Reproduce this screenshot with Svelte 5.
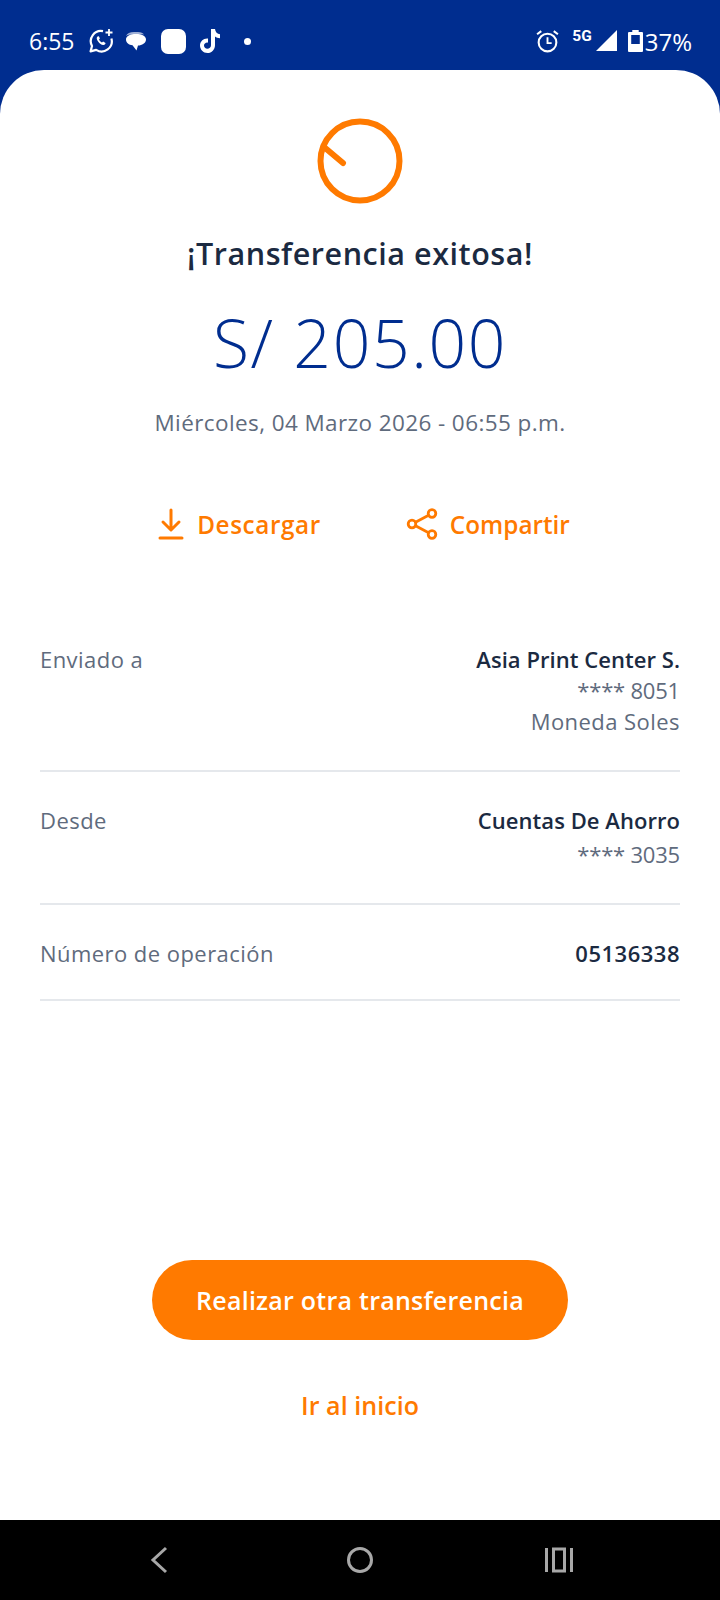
<script lang="ts">
  const rows = [
    { label: 'Enviado a', title: 'Asia Print Center S.', lines: ['**** 8051', 'Moneda Soles'] },
    { label: 'Desde', title: 'Cuentas De Ahorro', lines: ['**** 3035'] },
    { label: 'Número de operación', title: '05136338', lines: [] as string[] }
  ]
</script>

<div class="phone">
  <header class="status">
    <div class="status-left">
      <span class="clock">6:55</span>
      <svg width="26" height="26" viewBox="0 0 26 26" fill="none" stroke="#fff" stroke-width="2.2" class="i-wa">
        <path d="M15 3.2A10.2 10.2 0 0 0 4 18l-1.4 5.4 5.6-1.5A10.2 10.2 0 0 0 23.4 10.5" stroke-linejoin="round"/>
        <path d="M9.5 8.5c-1.2 1-1 2.8.6 5s3.6 3.6 5.4 3.4c1.3-.2 2.1-1 2-2l-2.4-1.3-1.1 1c-1.3-.5-2.4-1.7-3-3l.9-1-1-2.4z" fill="#fff" stroke="none"/>
        <path d="M21 1v7M17.5 4.500h7" stroke-width="1.800"/>
      </svg>
      <svg width="24" height="24" viewBox="0 0 24 24" class="i-msg">
        <path d="M2 7c1-2.500 4-4 8-4h4c3 0 5 1 6 2.500-2-.5-4-.5-7-.5-5 0-9 .5-11 2z" fill="#9fb0d6"/>
        <path d="M2 10.500C2 7 6 5 12 5s10 2 10 5.500-4 6-8 6l-1.500 5-4-5.200C5 16 2 14 2 10.500z" fill="#fff"/>
      </svg>
      <span class="app-square"></span>
      <svg width="24" height="26" viewBox="0 0 24 26" class="i-tt">
        <path d="M13 1h4c.3 3 2.300 5 5 5.300v4c-2-.1-3.700-.7-5-1.700v8.600c0 4.300-3.300 7.800-7.500 7.800S2 21.500 2 17.500s3.500-7.500 8-7v4.200c-2-.5-4 1-4 2.900 0 1.800 1.500 3.200 3.300 3.200 2 0 3.700-1.400 3.700-3.600z" fill="#fff"/>
      </svg>
      <span class="dot"></span>
    </div>
    <div class="status-right">
      <svg width="25" height="25" viewBox="0 0 24 24" fill="none" stroke="#fff" class="i-alarm">
        <circle cx="12" cy="13" r="8.500" stroke-width="2"/>
        <path d="M12 8v5.500h4" stroke-width="1.800"/>
        <path d="M2 5l4-3M22 5l-4-3" stroke-width="2"/>
      </svg>
      <span class="net">5G</span>
      <svg width="22" height="22" viewBox="0 0 22 22" class="i-signal"><path d="M21 0v21H0z" fill="#fff"/></svg>
      <svg width="15" height="22" viewBox="0 0 14 22" preserveAspectRatio="none" class="i-batt">
        <path fill-rule="evenodd" d="M4 0h6v2h3a1 1 0 0 1 1 1v18a1 1 0 0 1-1 1H1a1 1 0 0 1-1-1V3a1 1 0 0 1 1-1h3zM3 5v9h8V5z" fill="#fff"/>
      </svg>
      <span class="pct">37%</span>
    </div>
  </header>

  <main class="card">
    <svg class="result-icon" width="86" height="86" viewBox="0 0 86 86" fill="none" stroke="#ff7a00" stroke-width="6" stroke-linecap="round">
      <circle cx="43" cy="43" r="39.500"/>
      <path d="M7 29l19 16"/>
    </svg>
    <h1>¡Transferencia exitosa!</h1>
    <p class="amount">S/ 205.00</p>
    <p class="date">Miércoles, 04 Marzo 2026 - 06:55 p.m.</p>

    <div class="actions">
      <button class="action">
        <svg width="26" height="32" viewBox="0 0 26 32" fill="none" stroke="#ff7a00" stroke-width="3" stroke-linecap="round" stroke-linejoin="round">
          <path d="M13 2v19M5 14l8 8 8-8M2 30h22"/>
        </svg>
        Descargar
      </button>
      <button class="action share">
        <svg width="32" height="32" viewBox="0 0 32 32" fill="none" stroke="#ff7a00" stroke-width="2.800">
          <circle cx="6" cy="16" r="3.800"/>
          <circle cx="26" cy="5.500" r="3.800"/>
          <circle cx="26" cy="26.500" r="3.800"/>
          <path d="M9.500 14.200L22.600 7.300M9.500 17.800l13.100 6.900"/>
        </svg>
        Compartir
      </button>
    </div>

    <section class="details">
      {#each rows as row}
        <div class="row">
          <span class="label">{row.label}</span>
          <div class="values">
            <strong>{row.title}</strong>
            {#each row.lines as line}
              <span class:masked={line.startsWith('*')}>{line}</span>
            {/each}
          </div>
        </div>
      {/each}
    </section>

    <div class="footer">
      <button class="primary">Realizar otra transferencia</button>
      <button class="link">Ir al inicio</button>
    </div>
  </main>

  <nav class="navbar">
    <svg width="20" height="28" viewBox="0 0 20 28" fill="none" stroke="#a8a8a8" stroke-width="3"><path d="M17 2L4 14l13 12"/></svg>
    <svg class="home" width="28" height="28" viewBox="0 0 28 28" fill="none" stroke="#a8a8a8" stroke-width="3"><circle cx="14" cy="14" r="11.500"/></svg>
    <svg class="recents" width="28" height="26" viewBox="0 0 28 26" fill="none" stroke="#a8a8a8" stroke-width="3"><path d="M1.500 1v24M26.500 1v24"/><rect x="8.500" y="2" width="11" height="22"/></svg>
  </nav>
</div>

<style>
  :global(body) {
    margin: 0;
    background: #fff;
  }

  .phone {
    width: 720px;
    height: 1600px;
    display: flex;
    flex-direction: column;
    background: #002d8f;
    font-family: "Open Sans", "Liberation Sans", sans-serif;
    overflow: hidden;
  }

  .status {
    height: 70px;
    flex: none;
    display: flex;
    justify-content: space-between;
    align-items: center;
    padding: 12px 28px 0 29px;
    box-sizing: border-box;
    color: #fff;
  }

  .status-left,
  .status-right {
    display: flex;
    align-items: center;
  }

  .clock {
    font-size: 23px;
    margin-right: 13px;
  }

  .i-msg {
    margin-left: 10px;
  }

  .app-square {
    width: 25px;
    height: 25px;
    border-radius: 7px;
    background: #fff;
    margin-left: 13px;
  }

  .i-tt {
    margin-left: 12px;
  }

  .dot {
    width: 7px;
    height: 7px;
    border-radius: 50%;
    background: #fff;
    margin-left: 22px;
  }

  .net {
    font: 700 15.500px "Roboto", sans-serif;
    margin: -10px 4px 0 12px;
  }

  .i-batt {
    margin-left: 10px;
    margin-right: 2px;
  }

  .pct {
    font-size: 24px;
  }

  .card {
    flex: 1;
    background: #fff;
    border-radius: 44px 44px 0 0;
    display: flex;
    flex-direction: column;
    align-items: center;
    padding-top: 48px;
    box-sizing: border-box;
  }

  .result-icon {
    flex: none;
  }

  h1 {
    margin: 29px 0 0;
    font-size: 30.500px;
    line-height: 40px;
    font-weight: 600;
    letter-spacing: 0.55px;
    color: #1b2a41;
  }

  .amount {
    margin: 29px 0 0;
    font-size: 66px;
    line-height: 80px;
    font-weight: 300;
    letter-spacing: 1.6px;
    color: #002d8f;
  }

  .date {
    margin: 26px 0 0;
    font-size: 22.500px;
    line-height: 30px;
    letter-spacing: 0.4px;
    color: #5f6b7d;
  }

  .actions {
    display: flex;
    gap: 85px;
    margin: 66px 0 0 8px;
    height: 40px;
  }

  .action {
    display: flex;
    align-items: center;
    gap: 13px;
    padding: 0;
    border: 0;
    background: none;
    font: 600 24.300px "Open Sans", sans-serif;
    letter-spacing: 0.6px;
    color: #ff7a00;
  }

  .action.share {
    gap: 12px;
    letter-spacing: 0;
  }

  .details {
    width: 640px;
    margin-top: 99.500px;
  }

  .row {
    display: flex;
    justify-content: space-between;
    border-bottom: 2px solid #e5e8ec;
    padding-bottom: 33px;
    margin-bottom: 33px;
    font-size: 22px;
    line-height: 31px;
    letter-spacing: 0.45px;
    color: #5f6b7d;
  }

  .row:last-child {
    padding-bottom: 30px;
  }

  .row:nth-child(2) strong {
    margin-bottom: 3px;
  }

  .values {
    display: flex;
    flex-direction: column;
    align-items: flex-end;
  }

  .values strong {
    font-weight: 600;
    letter-spacing: 0.05px;
    color: #1b2a41;
  }

  .row:last-child strong {
    letter-spacing: 0.5px;
  }

  .masked {
    letter-spacing: -0.2px;
  }

  .footer {
    margin-top: auto;
    display: flex;
    flex-direction: column;
    align-items: center;
    padding-bottom: 96px;
  }

  .primary {
    width: 416px;
    height: 80px;
    border: 0;
    border-radius: 40px;
    background: #ff7a00;
    color: #fff;
    font: 600 25px "Open Sans", sans-serif;
    letter-spacing: 0.25px;
  }

  .link {
    margin-top: 46px;
    padding: 0;
    border: 0;
    background: none;
    color: #ff7a00;
    font: 600 25px/38px "Open Sans", sans-serif;
    letter-spacing: 0.05px;
  }

  .navbar {
    height: 80px;
    flex: none;
    background: #000;
    display: flex;
    align-items: center;
    padding-left: 149px;
    box-sizing: border-box;
  }

  .home {
    margin-left: 177px;
  }

  .recents {
    margin-left: 171px;
  }
</style>
